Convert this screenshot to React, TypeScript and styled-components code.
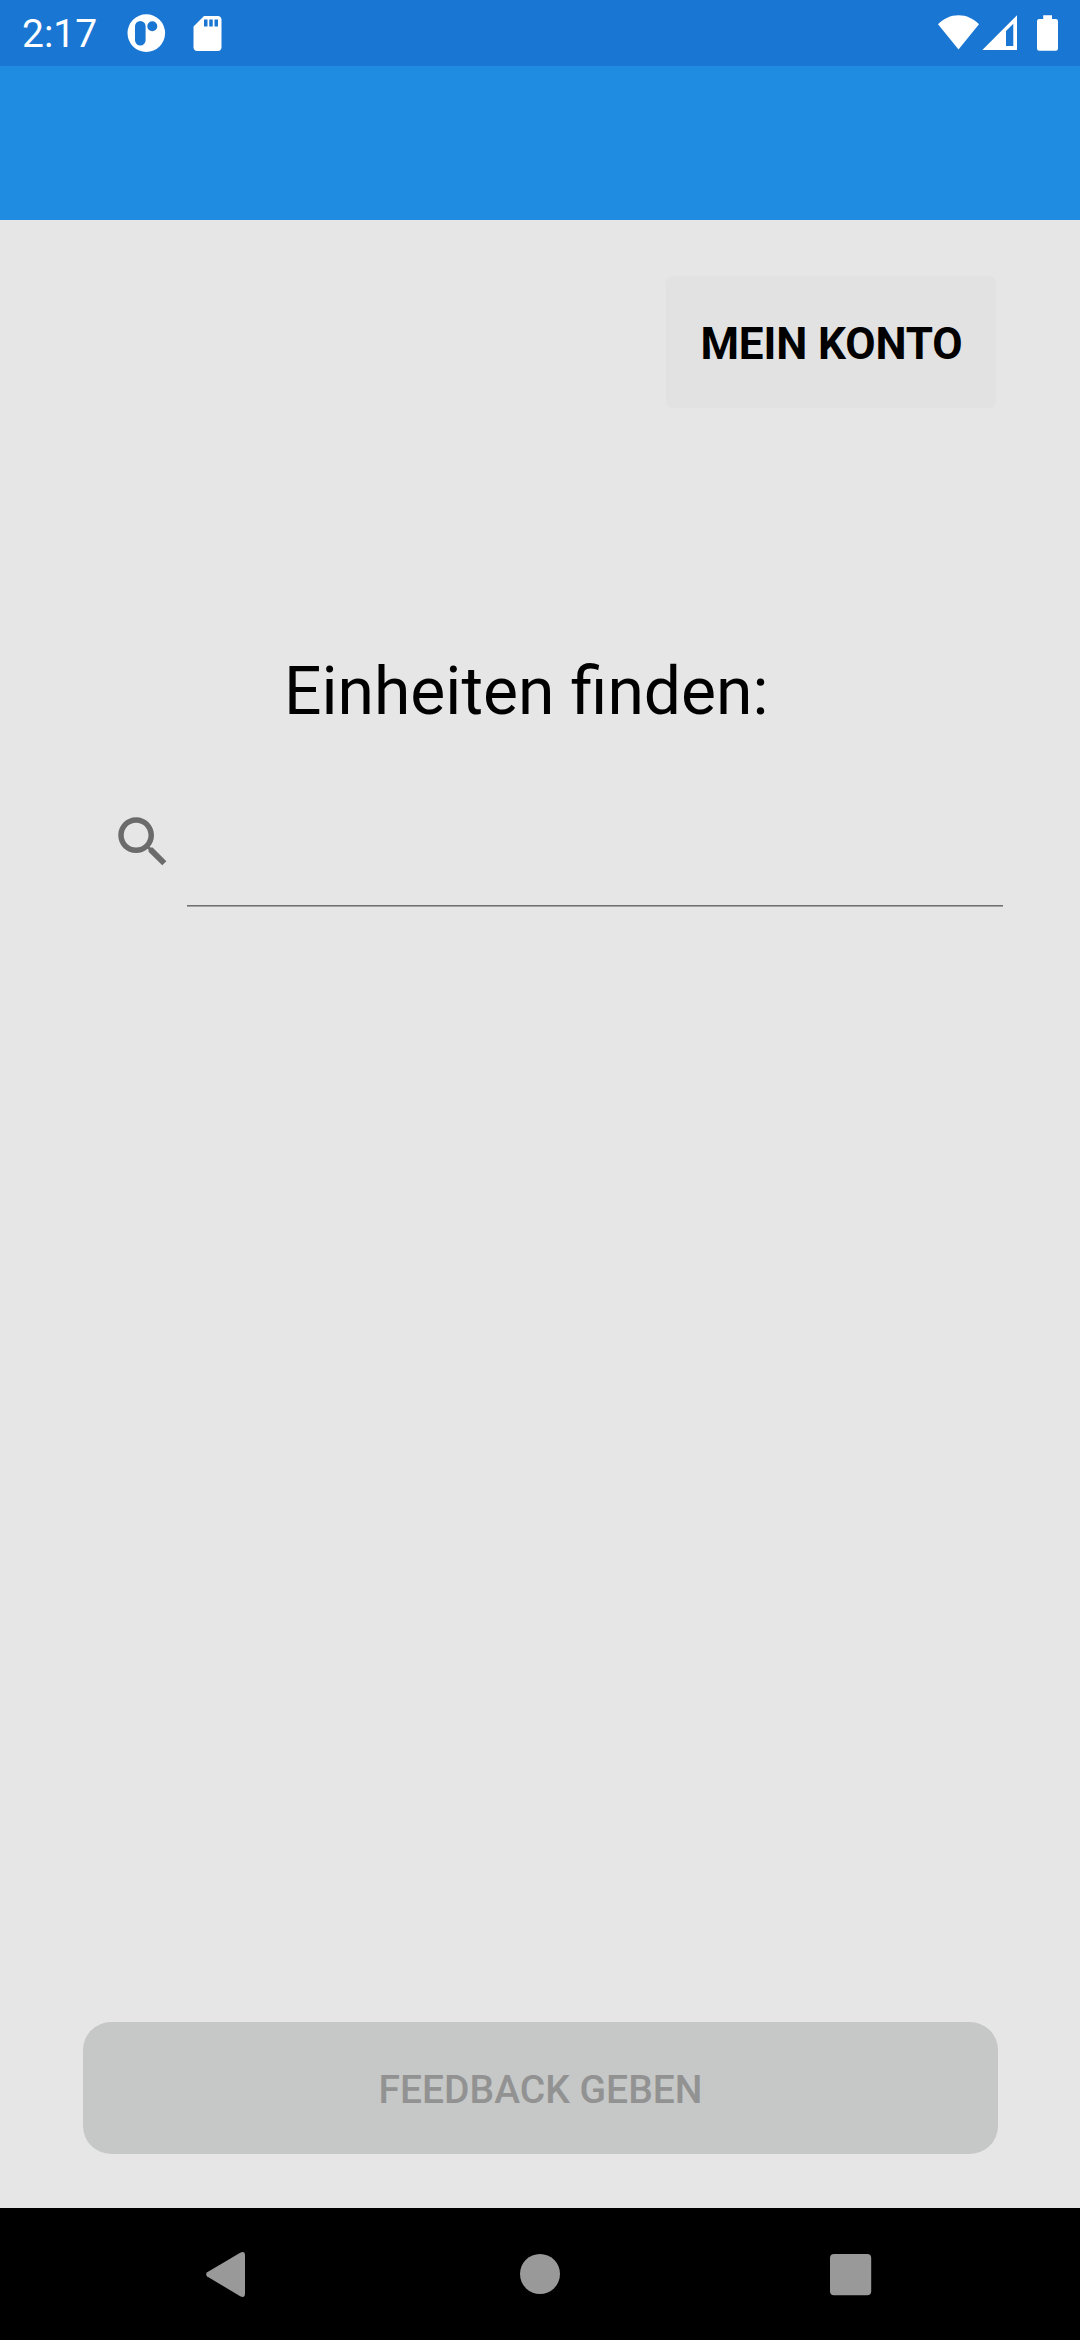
import React from 'react';
import styled, { createGlobalStyle } from 'styled-components';

const GlobalStyle = createGlobalStyle`
  *, *::before, *::after { box-sizing: border-box; }
  body { margin: 0; background: #e6e6e6; }
`;

const Screen = styled.div`
  display: flex;
  flex-direction: column;
  width: 1080px;
  height: 2340px;
  overflow: hidden;
  background: #e6e6e6;
  font-family: Roboto, 'Liberation Sans', sans-serif;
  color: #000;
`;

const StatusBar = styled.header`
  display: flex;
  justify-content: space-between;
  height: 66px;
  padding: 0 16px 0 22px;
  background: #1976d2;
  color: #fff;
`;

const StatusGroup = styled.div`
  display: flex;
  align-items: center;
`;

const Clock = styled.time`
  width: 100px;
  font-size: 39px;
  line-height: 66px;
  padding-top: 2px;
`;

const Glyph = styled.svg<{ $w: number; $h: number }>`
  display: block;
  flex: none;
  width: ${(p) => p.$w}px;
  height: ${(p) => p.$h}px;
  fill: currentColor;
`;

const AppBar = styled.div`
  height: 154px;
  background: #1f8be1;
`;

const Content = styled.main`
  flex: 1;
  display: flex;
  flex-direction: column;
  padding: 56px 0 54px;
`;

const AccountButton = styled.button`
  align-self: flex-end;
  width: 330px;
  height: 132px;
  margin-right: 84px;
  padding: 4px 0 0 1px;
  border: 0;
  border-radius: 6px;
  background: #e2e2e2;
  color: #000;
  font: 700 44px/52px Roboto, 'Liberation Sans', sans-serif;
  letter-spacing: -0.1px;
  text-transform: uppercase;
  white-space: nowrap;
`;

const Title = styled.h1`
  margin: 245px 0 0 284px;
  font-size: 66px;
  font-weight: 400;
  line-height: 78px;
  white-space: nowrap;
`;

const SearchRow = styled.label`
  display: flex;
  margin: 78px 77px 0 110px;
  height: 98px;
  color: #6b6b6b;
`;

const SearchInput = styled.input`
  flex: 1;
  min-width: 0;
  margin-left: 11px;
  padding: 0 11px;
  border: 0;
  outline: 0;
  background: linear-gradient(#6f6f6f 0 1px, #a2a2a2 1px 2px) left bottom / 100% 2px no-repeat;
  font: 400 49.5px Roboto, 'Liberation Sans', sans-serif;
`;

const FeedbackButton = styled.button`
  height: 132px;
  margin: auto 82px 0 83px;
  padding: 4px 0 0;
  border: 0;
  border-radius: 28px;
  background: #c6c8c7;
  color: #929292;
  font: 500 39px/46px Roboto, 'Liberation Sans', sans-serif;
  text-transform: uppercase;
`;

const NavBar = styled.nav`
  display: grid;
  grid-template-columns: 450px 180px 450px;
  align-items: center;
  justify-items: center;
  height: 132px;
  background: #000;
  color: #999;
`;

export default function App() {
  return (
    <Screen>
      <GlobalStyle />
      <StatusBar>
        <StatusGroup>
          <Clock>2:17</Clock>
          <Glyph $w={50} $h={66} viewBox="122 0 50 66">
            <path
              fillRule="evenodd"
              d="M146.3 14.3a18.8 18.8 0 1 1 0 37.6a18.8 18.8 0 1 1 0-37.6zM140.3 21a5.3 5.3 0 0 0-5.3 5.3v14a5.3 5.3 0 0 0 10.6 0v-14a5.3 5.3 0 0 0-5.3-5.3zM152.3 21.3a5 5 0 1 0 0 10a5 5 0 1 0 0-10z"
            />
          </Glyph>
          <Glyph $w={60} $h={66} viewBox="172 0 60 66">
            <path
              transform="translate(186.5 12.6) scale(1.75)"
              d="M18 2h-8L4.02 8 4 20c0 1.1.9 2 2 2h12c1.1 0 2-.9 2-2V4c0-1.1-.9-2-2-2zm-6 6h-2V4h2v4zm3 0h-2V4h2v4zm3 0h-2V4h2v4z"
            />
          </Glyph>
        </StatusGroup>
        <StatusGroup>
          <Glyph $w={45} $h={66} viewBox="936 0 45 66">
            <path d="M938 24.3C943.500 18.500 950.500 15.200 958.500 15.200S973.500 18.500 979 24.300L958.500 49.500z" />
          </Glyph>
          <Glyph $w={45} $h={66} viewBox="981 0 45 66">
            <path fillRule="evenodd" d="M982.300 50L1017 15.200V50zM1006 31V46H1013.300V23.700z" />
          </Glyph>
          <Glyph $w={38} $h={66} viewBox="1026 0 38 66">
            <path d="M1043.200 15.300h8.800v3.700h3.800a2.200 2.200 0 0 1 2.200 2.200v27.400a2.200 2.200 0 0 1-2.200 2.200h-16.600a2.200 2.200 0 0 1-2.200-2.200v-27.400a2.200 2.200 0 0 1 2.200-2.200h4z" />
          </Glyph>
        </StatusGroup>
      </StatusBar>
      <AppBar />
      <Content>
        <AccountButton type="button">Mein Konto</AccountButton>
        <Title>Einheiten finden:</Title>
        <SearchRow>
          <Glyph $w={66} $h={66} viewBox="0 0 24 24">
            <path d="M15.500 14h-.79l-.28-.27C15.410 12.590 16 11.110 16 9.500 16 5.910 13.090 3 9.500 3S3 5.910 3 9.500 5.910 16 9.500 16c1.610 0 3.090-.59 4.230-1.570l.27.28v.79l5 4.990L20.490 19l-4.990-5zm-6 0C7.010 14 5 11.990 5 9.500S7.010 5 9.500 5 14 7.010 14 9.500 11.990 14 9.500 14z" />
          </Glyph>
          <SearchInput type="text" aria-label="Einheiten finden" />
        </SearchRow>
        <FeedbackButton type="button" disabled>
          Feedback geben
        </FeedbackButton>
      </Content>
      <NavBar>
        <Glyph $w={80} $h={132} viewBox="185 2208 80 132">
          <path d="M207.200 2272.300L240.200 2252.700Q245 2250.500 245 2255.500V2293.500Q245 2298.500 240.200 2296.200L207.200 2276.500Q205.200 2274.500 207.200 2272.300z" />
        </Glyph>
        <Glyph $w={60} $h={132} viewBox="510 2208 60 132">
          <circle cx="540" cy="2274" r="20" />
        </Glyph>
        <Glyph $w={60} $h={132} viewBox="825 2208 60 132">
          <rect x="830" y="2254" width="41.200" height="41.300" rx="4" />
        </Glyph>
      </NavBar>
    </Screen>
  );
}
